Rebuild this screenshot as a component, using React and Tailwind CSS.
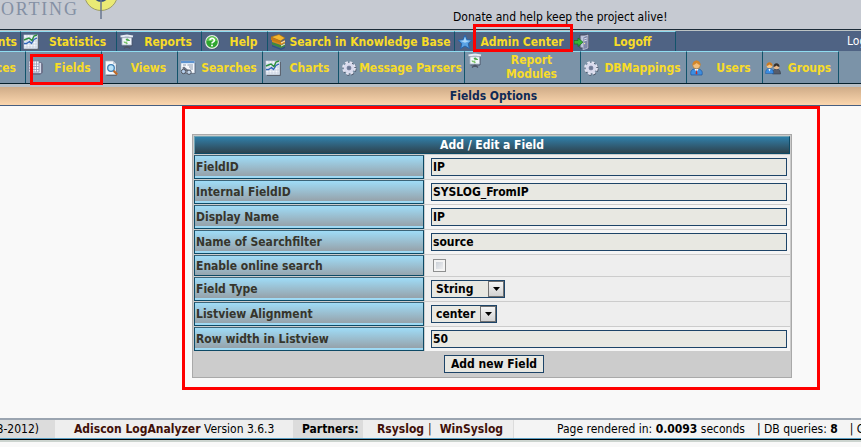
import React from 'react';

function ChartIcon() {
  return (
    <svg viewBox="0 0 16 16" className="w-4 h-4 shrink-0">
      <path d="M2 15.5h13.5V2" stroke="#5d6470" fill="none" />
      <rect x="1" y="1" width="13.5" height="13.5" fill="#f4f7fb" stroke="#d4dbe6" strokeWidth="0.6" />
      <path d="M4 1v13M7 1v13M10 1v13M13 1v13M1 4h13M1 7h13M1 10h13M1 13h13" stroke="#b9c4d6" strokeWidth="0.6" />
      <path d="M1 9.500h2.500l3-2 2 2 2.500-4L14 4" stroke="#2f63b8" strokeWidth="1.300" fill="none" />
      <path d="M1 6l2.500-1L6 4l3 2.500L11 2l3-1" stroke="#2b8f3c" strokeWidth="1.400" fill="none" />
    </svg>
  );
}

function BoardIcon() {
  return (
    <svg viewBox="0 0 16 16" className="w-4 h-4 shrink-0">
      <path d="M8 10v4M5 14.500l3-2.500 3 2.500" stroke="#4d5566" strokeWidth="1.600" fill="none" />
      <path d="M3.500 12h9.500V4" stroke="#4d5566" fill="none" />
      <path d="M3 3h9.500v8H3z" fill="#f4f8fc" stroke="#aab5c6" strokeWidth="0.800" />
      <path d="M1.500 2.500L8 1.500l6 1" stroke="#e6ebf3" strokeWidth="2" fill="none" />
      <path d="M1.500 3.700h12.500" stroke="#7e8a9e" strokeWidth="0.600" />
      <path d="M6.500 5.500l2-1.500v1c1.500 0 2.500 1 2.500 2H9.500L8.500 6.500v1z" fill="#46a844" />
      <path d="M9 9.500l-2 1v-1C5.500 9.500 4.500 8.500 4.500 7.500H6l1 .5V7z" fill="#7fc46f" />
    </svg>
  );
}

function HelpIcon() {
  return (
    <svg viewBox="0 0 16 16" className="w-4 h-4 shrink-0">
      <circle cx="8.500" cy="8.600" r="7" fill="#2d3d33" opacity="0.500" />
      <circle cx="8" cy="8" r="6.900" fill="#e8eee8" />
      <circle cx="8" cy="8" r="5.800" fill="#2fa62f" />
      <path d="M3 7a5 4.500 0 0 1 10 0z" fill="#63c652" />
      <path d="M5.900 6.300a2.200 1.900 0 1 1 3.200 1.600Q8 8.300 8 9.400" stroke="#fff" strokeWidth="1.600" fill="none" />
      <circle cx="8" cy="11.500" r="1" fill="#fff" />
    </svg>
  );
}

function BooksIcon() {
  return (
    <svg viewBox="0 0 16 16" className="w-4 h-4 shrink-0">
      <path d="M2 11l9 3.500 4-2.500v2l-4 2-9-3.500z" fill="#2f5486" />
      <path d="M2 8l9 3.500 4-2v2.500l-4 2L2 10.500z" fill="#3e8b3d" />
      <path d="M2 5l9 3 4-2v3l-4 2-9-3z" fill="#d98c1b" />
      <path d="M11 8.500l4-2v1l-4 2zM11 11.500l4-2v1l-4 2z" fill="#f8efcf" />
      <path d="M1 3l8-2.500L15 4l-4.500 3z" fill="#f4b72e" stroke="#a5680d" strokeWidth="0.600" />
      <path d="M1 3v3l9.500 3.500V7z" fill="#c77a13" />
    </svg>
  );
}

function StarIcon() {
  return (
    <svg viewBox="0 0 16 16" className="w-4 h-4 shrink-0">
      <path d="M8 1l2 4.800 5 .4-3.800 3.400 1.200 5L8 12l-4.400 2.600 1.200-5L1 6.200l5-.4z" fill="#5ba4e6" stroke="#2566ae" strokeWidth="1" strokeLinejoin="round" />
      <path d="M8 2.800l1.300 3.700 3.800.3-5.100 2-5-2 3.600-.3z" fill="#a8d6fa" />
    </svg>
  );
}

function ExitIcon() {
  return (
    <svg viewBox="0 0 16 16" className="w-4 h-4 shrink-0">
      <path d="M6 1h8.500v13H6z" fill="#b8bfd6" stroke="#42485c" />
      <path d="M9 3l5-2v13l-5 1.800z" fill="#8088aa" stroke="#d9dded" strokeWidth="0.600" />
      <path d="M10 5l3-1M10 7l3-1" stroke="#d5d9ea" />
      <circle cx="10.500" cy="9.500" r="0.700" fill="#f0e6a0" />
      <path d="M0 6.500h4V4l5 4.200-5 4.300V10H0z" fill="#39b338" stroke="#176b1c" strokeWidth="0.700" />
    </svg>
  );
}

function SheetsIcon() {
  return (
    <svg viewBox="0 0 16 16" className="w-4 h-4 shrink-0">
      <path d="M5 3.500h10v9l-3 2.500H5z" fill="#6c7288" />
      <path d="M4 2.500h9.500v11H4z" fill="#d9dceb" stroke="#5d6480" strokeWidth="0.700" />
      <path d="M1 1h10v11H1z" fill="#f7f8fd" stroke="#787f9c" strokeWidth="0.700" />
      <path d="M3.500 1v11M6 1v11M8.500 1v11M1 4h10M1 6.500h10M1 9.500h10" stroke="#969cb8" strokeWidth="0.800" />
    </svg>
  );
}

function ViewIcon() {
  return (
    <svg viewBox="0 0 16 16" className="w-4 h-4 shrink-0">
      <path d="M2.500 15.500h10v-11" stroke="#5c6878" fill="none" />
      <path d="M1.500 1h7.500l3 3v10.500H1.500z" fill="#f7f9fc" stroke="#aab4c2" strokeWidth="0.700" />
      <path d="M9 1v3h3z" fill="#c1cbd8" />
      <circle cx="7" cy="8" r="3.300" fill="#b9e2f8" stroke="#3e7fb5" strokeWidth="1.300" />
      <path d="M9.600 10.800l3.600 3.700" stroke="#bf6b28" strokeWidth="2.300" />
    </svg>
  );
}

function SearchesIcon() {
  return (
    <svg viewBox="0 0 16 16" className="w-4 h-4 shrink-0">
      <path d="M2 13.500h13V3" stroke="#5c6878" fill="none" />
      <path d="M1 1h13.500v12H1z" fill="#f6f9fd" stroke="#aab6c8" strokeWidth="0.600" />
      <path d="M1 1h13.500v2.200H1z" fill="#5c93d0" />
      <path d="M3 5h3M7.500 5H13M9 7h4M10 9h3" stroke="#8998ad" />
      <path d="M2 8l2-1.500 3 2.500 2.500 1.500-3 1z" fill="#6c7482" />
      <circle cx="3.500" cy="11.500" r="2.200" fill="#b4cdea" stroke="#4b525e" strokeWidth="1" />
      <circle cx="9" cy="12.200" r="2.200" fill="#c6daf0" stroke="#4b525e" strokeWidth="1" />
    </svg>
  );
}

function GearIcon() {
  return (
    <svg viewBox="0 0 16 16" className="w-4 h-4 shrink-0">
      <circle cx="8.500" cy="8.700" r="5.500" fill="none" stroke="#4a5468" strokeWidth="3" strokeDasharray="2.600 1.720" />
      <circle cx="8" cy="8" r="5.500" fill="none" stroke="#e3e5f2" strokeWidth="2.800" strokeDasharray="2.600 1.720" />
      <circle cx="8" cy="8" r="3.700" fill="none" stroke="#d9dbed" strokeWidth="3.200" />
      <circle cx="8" cy="8" r="2" fill="#6c7a94" stroke="#8085a5" strokeWidth="0.700" />
    </svg>
  );
}

function UserIcon() {
  return (
    <svg viewBox="0 0 16 16" className="w-4 h-4 shrink-0">
      <path d="M2 15c-1-4 1-6 4-6h2c4 0 6 2 5 6z" fill="#3d8ee0" stroke="#1c559c" strokeWidth="0.700" />
      <path d="M5.500 9l2 3 2-3z" fill="#fff" />
      <path d="M7.500 9.500l1 4-1 1-1-1z" fill="#c02c28" />
      <circle cx="7.500" cy="5" r="3.800" fill="#f3c07c" stroke="#a7681d" strokeWidth="0.500" />
      <path d="M3.500 5c0-6 8-6 8 0-2 0-3-1.500-4-2-1 1-2 2-4 2z" fill="#d2862a" />
    </svg>
  );
}

function GroupIcon() {
  return (
    <svg viewBox="0 0 16 16" className="w-4 h-4 shrink-0">
      <path d="M7.500 14c0-3 1-5 4-5s4 2 4 5z" fill="#565d6b" stroke="#2f3440" strokeWidth="0.500" />
      <circle cx="11.500" cy="6.500" r="2.800" fill="#e8b98a" />
      <path d="M8.500 7c-.5-5 6.500-5 6 0-1.500 0-2-1-3-1.500-1 .5-1.500 1.500-3 1.500z" fill="#34302e" />
      <path d="M0.500 13.500c0-3 1-5 4-5s4 2 4 5z" fill="#3b8de2" stroke="#1b549b" strokeWidth="0.500" />
      <path d="M3.500 9l1 2.500 1-2.500z" fill="#fff" />
      <circle cx="4.500" cy="5.500" r="2.800" fill="#f5c585" />
      <path d="M1.500 6c-.5-5 6.500-5 6 0-1.500 0-2-1-3-1.500-1 .5-1.500 1.500-3 1.500z" fill="#c97a22" />
    </svg>
  );
}

const mainMenu = [
  { label: 'Events', width: 'w-[21px]', clipped: true },
  { label: 'Statistics', width: 'w-24', icon: ChartIcon },
  { label: 'Reports', width: 'w-[85px]', icon: BoardIcon },
  { label: 'Help', width: 'w-[66px]', icon: HelpIcon },
  { label: 'Search in Knowledge Base', width: 'w-[187px]', icon: BooksIcon },
  { label: 'Admin Center', width: 'w-[117px]', icon: StarIcon, marked: true },
  { label: 'Logoff', width: 'w-[104px]', icon: ExitIcon },
];

const adminMenu = [
  { label: 'Sources', width: 'w-[26px]', clipped: true },
  { label: 'Fields', width: 'w-[76px]', icon: SheetsIcon, marked: true },
  { label: 'Views', width: 'w-[76px]', icon: ViewIcon },
  { label: 'Searches', width: 'w-[85px]', icon: SearchesIcon },
  { label: 'Charts', width: 'w-[76px]', icon: ChartIcon },
  { label: 'Message Parsers', width: 'w-[126px]', icon: GearIcon },
  { label: 'Report Modules', width: 'w-[116px]', icon: BoardIcon, wrap: true },
  { label: 'DBMappings', width: 'w-[106px]', icon: GearIcon },
  { label: 'Users', width: 'w-[76px]', icon: UserIcon },
  { label: 'Groups', width: 'w-[76px]', icon: GroupIcon },
];

const fields = [
  { id: 'fieldid', label: 'FieldID', type: 'text', value: 'IP', bg: 'bg-[#eeeeee]' },
  { id: 'internal', label: 'Internal FieldID', type: 'text', value: 'SYSLOG_FromIP', bg: 'bg-[#f5f5f5]' },
  { id: 'display', label: 'Display Name', type: 'text', value: 'IP', bg: 'bg-[#f5f5f5]' },
  { id: 'filter', label: 'Name of Searchfilter', type: 'text', value: 'source', bg: 'bg-[#f5f5f5]' },
  { id: 'online', label: 'Enable online search', type: 'checkbox', bg: 'bg-[#eeeeee]' },
  { id: 'fieldtype', label: 'Field Type', type: 'select', width: 'w-[74px]', options: ['String', 'Number', 'Date'], bg: 'bg-[#eeeeee]' },
  { id: 'align', label: 'Listview Alignment', type: 'select', width: 'w-[66px]', options: ['center', 'left', 'right'], bg: 'bg-[#eeeeee]' },
  { id: 'rowwidth', label: 'Row width in Listview', type: 'text', value: '50', bg: 'bg-[#f5f5f5]' },
];

function MenuItem({ item, clipClass, markClass }) {
  const Icon = item.icon;
  return (
    <a
      href="#"
      className={`relative flex shrink-0 ${item.width} ${item.wrap ? 'items-start pt-px' : 'items-center'} ${
        item.clipped ? `justify-end overflow-hidden ${clipClass}` : 'pl-0.5'
      } border-t border-r border-t-[#8fdcf0] border-r-[#12536b] font-bold text-[#f8dc28] leading-[14px] whitespace-nowrap`}
    >
      {Icon && <Icon />}
      <span className={item.clipped ? '' : `flex-1 text-center ${item.wrap ? 'whitespace-normal px-5' : ''}`}>{item.label}</span>
      {item.marked && <span className={`absolute z-10 border-3 border-[#ff0000] pointer-events-none ${markClass}`}></span>}
    </a>
  );
}

function FieldControl({ field }) {
  if (field.type === 'checkbox') {
    return (
      <input
        id={field.id}
        type="checkbox"
        className="block appearance-none w-[13px] h-[13px] ml-0.5 border border-[#8e8f8f] bg-linear-to-br from-[#c3c9d2] to-[#f6f6f6] shadow-[inset_0_0_0_2px_#f4f4f4]"
      />
    );
  }
  if (field.type === 'select') {
    return (
      <div className={`relative ${field.width}`}>
        <select
          id={field.id}
          className="block appearance-none w-full h-[18px] pl-1 border border-[#1d4468] bg-[#e8e8e2] font-bold leading-4"
        >
          {field.options.map((option) => (
            <option key={option}>{option}</option>
          ))}
        </select>
        <span className="absolute right-px top-px w-4 h-4 border border-[#707070] bg-linear-to-b from-[#f5f5f5] to-[#d2d2d2] flex items-center justify-center pointer-events-none">
          <svg viewBox="0 0 7 4" className="w-[7px] h-1">
            <path d="M0 0h7L3.500 4z" fill="#000" />
          </svg>
        </span>
      </div>
    );
  }
  return (
    <input
      id={field.id}
      type="text"
      defaultValue={field.value}
      className="block w-full h-[18px] px-px border border-[#1d4468] bg-[#e8e8e2] font-bold leading-4"
    />
  );
}

function FieldForm() {
  return (
    <form className="relative w-[600px]" onSubmit={(e) => e.preventDefault()}>
      <div className="absolute -left-2.5 -right-7 -top-7 -bottom-3 border-3 border-[#ff0000] pointer-events-none"></div>
      <table className="w-full table-fixed border-separate border-spacing-px border border-[#a9a9a9] bg-[#cccccc]">
        <colgroup>
          <col className="w-[230px]" />
          <col />
        </colgroup>
        <thead>
          <tr>
            <th
              colSpan={2}
              className="h-[18px] p-0 border border-t-[#6fa3b4] border-l-[#6fa3b4] border-r-[#0d4a66] border-b-[#0d4a66] bg-linear-to-b from-[#2f80aa] to-[#2c434f] text-white leading-4"
            >
              Add / Edit a Field
            </th>
          </tr>
        </thead>
        <tbody>
          {fields.map((field) => (
            <tr key={field.id} className={field.type === 'checkbox' ? 'h-[21px]' : 'h-6'}>
              <td className="p-0 pl-px border border-[#0d4a66] border-t-[#3c6478] bg-[linear-gradient(#9fdcf7,#96a2aa)] bg-[length:100%_20px] font-bold text-[#36352c] leading-4">
                <label htmlFor={field.id} className="block">
                  {field.label}
                </label>
              </td>
              <td className={`py-0 pl-1.5 pr-[3px] ${field.bg}`}>
                <FieldControl field={field} />
              </td>
            </tr>
          ))}
          <tr>
            <td colSpan={2} className="h-6 p-0 pl-1">
              <button type="submit" className="block mx-auto w-[100px] h-[18px] border border-[#1d4468] bg-[#e8e8e2] font-bold leading-4">
                Add new Field
              </button>
            </td>
          </tr>
        </tbody>
      </table>
    </form>
  );
}

function App() {
  return (
    <div className="min-h-screen overflow-hidden bg-[#f9f9f9] text-black text-xs leading-4 font-['DejaVu_Sans_Condensed','DejaVu_Sans',sans-serif]">
      <header className="flex items-start h-[29px] bg-[#c6cad2]">
        <div className="flex w-[453px] shrink-0">
          <span className="w-[84px] pl-px font-['Liberation_Serif',serif] text-lg leading-[18px] tracking-widest text-[#8490a4]">
            ORTING
          </span>
          <svg viewBox="0 0 36 20" className="w-9 h-5">
            <circle cx="17" cy="-6" r="16.500" fill="#eaea75" stroke="#9c9b68" />
            <circle cx="17" cy="-6" r="8" fill="#344f7c" />
            <path d="M17 0v19" stroke="#68768f" strokeWidth="1.500" />
          </svg>
        </div>
        <a href="#" className="pt-[9px] whitespace-nowrap">Donate and help keep the project alive!</a>
      </header>

      <nav className="flex h-[22px] border-t border-t-[#1c2c38] bg-[#4f6384] shadow-[inset_0_1px_0_#bcc3c4] pt-px">
        {mainMenu.map((item) => (
          <MenuItem key={item.label} item={item} clipClass="pr-[3px]" markClass="left-[18px] -right-0.5 -top-2 -bottom-px" />
        ))}
        <span className="flex-1 pl-[171px] pt-0.5 text-white whitespace-nowrap overflow-hidden">Logged in as</span>
      </nav>
      <nav className="flex h-[33px] border-b border-b-[#06202c] bg-[#7b93a8]">
        {adminMenu.map((item) => (
          <MenuItem key={item.label} item={item} clipClass="pr-[9px]" markClass="left-1 -right-0.5 top-0.5 -bottom-0.5" />
        ))}
      </nav>

      <div className="h-[22px] border-t-3 border-t-[#b9c0c6] border-b border-b-[#465f82] bg-linear-to-b from-[#cfac88] to-[#fbd6ae] pl-[126px] text-center font-bold text-[#0f2a56] leading-[18px]">
        Fields Options
      </div>

      <main className="flex justify-center pt-7 pb-10 pl-[123px]">
        <FieldForm />
      </main>

      <footer className="flex h-[22px] border-t-2 border-t-[#9ba5b1] border-b border-b-black bg-[#f4f4f4] whitespace-nowrap shadow-[inset_0_-1px_0_#5b9fc4,0_2px_0_#ccd4cf] leading-[18px]">
        <span className="flex w-[55px] shrink-0 justify-end overflow-hidden bg-[#dcdcdc] pr-4 mb-px">(C) 2008-2012)</span>
        <span className="w-[238px] shrink-0 bg-[#eeeeee] pl-[19px] mb-px">
          <a href="#" className="font-bold text-[#401008]">Adiscon LogAnalyzer</a> Version 3.6.3
        </span>
        <span className="w-[70px] shrink-0 bg-[#dcdcdc] pl-[9px] font-bold mb-px">Partners:</span>
        <span className="flex w-[151px] shrink-0 bg-[#eeeeee] border-r border-[#dcdcdc] pl-3.5 mb-px font-bold text-[#401008]">
          <a href="#">Rsyslog</a>
          <span className="font-normal pl-1 pr-2">|</span>
          <a href="#">WinSyslog</a>
        </span>
        <span className="flex flex-1 gap-3 overflow-hidden pl-[43px]">
          <span>Page rendered in: <b>0.0093</b> seconds</span>
          <span>| DB queries: <b>8</b></span>
          <span>| GZIP</span>
        </span>
      </footer>
    </div>
  );
}

export default App;
